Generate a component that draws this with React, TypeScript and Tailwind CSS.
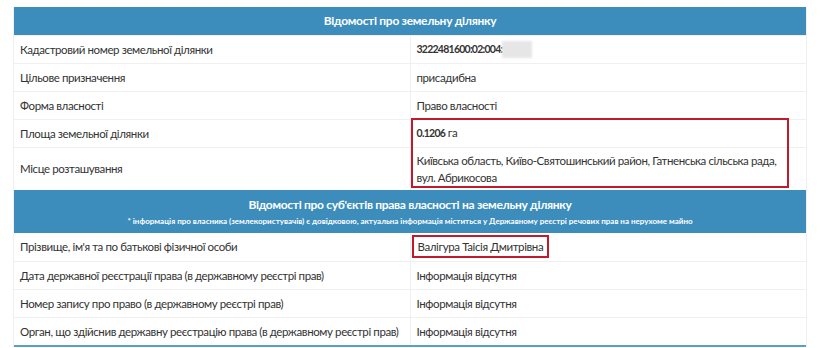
const rowsTop: [string, React.ReactNode][] = [
  [
    "Кадастровий номер земельної ділянки",
    <span className="font-bold text-[10.5px] tracking-[-0.75px]">
      3222481600:02:004:
      <span className="inline-block align-middle w-[30px] h-[17px] bg-[#e6e6e6] blur-[1px]" />
    </span>,
  ],
  ["Цільове призначення", "присадибна"],
  ["Форма власності", "Право власності"],
];

const rowsBottom: string[] = [
  "Дата державної реєстрації права (в державному реєстрі прав)",
  "Номер запису про право (в державному реєстрі прав)",
  "Орган, що здійснив державну реєстрацію права (в державному реєстрі прав)",
];

const Row = ({ label, value, tall }: { label: string; value: React.ReactNode; tall?: boolean }) => (
  <tr className="border-t border-[#f0f0f0]">
    <td className={`w-[397px] pl-[6px] align-middle whitespace-nowrap ${tall ? "h-[43px]" : "h-[28px]"}`}>{label}</td>
    <td className="border-l border-[#f0f0f0] pl-[6px] pr-[6px] align-middle">{value}</td>
  </tr>
);

export default function App() {
  return (
    <div className="w-[820px] h-[348px] bg-white pt-[7px] pl-[13px] text-[#333] text-[11.5px] tracking-[-0.4px] leading-[17px] font-['Lato','Liberation_Sans',sans-serif]">
      <div className="relative w-[794px] border-x border-[#f0f0f0]">
        <table className="w-full border-collapse table-fixed">
          <tbody>
            <tr>
              <th colSpan={2} className="h-[28px] bg-[#3c8dbc] text-white font-bold text-[12px] tracking-[-0.3px] text-center">
                Відомості про земельну ділянку
              </th>
            </tr>
            {rowsTop.map(([l, v]) => (
              <Row key={l} label={l} value={v} />
            ))}
            <Row
              label="Площа земельної ділянки"
              value={
                <span>
                  <span className="font-bold text-[10.5px] tracking-[-0.7px]">0.1206</span> га
                </span>
              }
            />
            <Row
              tall
              label="Місце розташування"
              value={
                <>
                  Київська область, Київо-Святошинський район, Гатненська сільська рада,
                  <br />
                  вул. Абрикосова
                </>
              }
            />
            <tr>
              <th colSpan={2} className="h-[43px] bg-[#3c8dbc] text-white text-center align-top pt-[6px]">
                <div className="font-bold text-[12px] tracking-[-0.3px] leading-[17px]">
                  Відомості про суб'єктів права власності на земельну ділянку
                </div>
                <div className="font-bold text-[8px] tracking-normal leading-[12px] mt-[2px]">
                  * інформація про власника (землекористувачів) є довідковою, актуальна інформація міститься у Державному реєстрі речових прав на нерухоме майно
                </div>
              </th>
            </tr>
            <tr>
              <td className="h-[28px] pl-[6px] align-middle whitespace-nowrap">Прізвище, ім'я та по батькові фізичної особи</td>
              <td className="border-l border-[#f0f0f0] pl-[1px] align-middle">
                <span className="inline-block border-2 border-[#c01a2c] px-[4px] leading-[19px]">Валігура Таісія Дмитрівна</span>
              </td>
            </tr>
            {rowsBottom.map((l) => (
              <Row key={l} label={l} value="Інформація відсутня" />
            ))}
          </tbody>
        </table>
        <div className="border-b-2 border-[#5b9ec7]" />
        <div className="absolute left-[397px] top-[111px] w-[378px] h-[70px] border-2 border-[#c01a2c] pointer-events-none" />
      </div>
    </div>
  );
}
